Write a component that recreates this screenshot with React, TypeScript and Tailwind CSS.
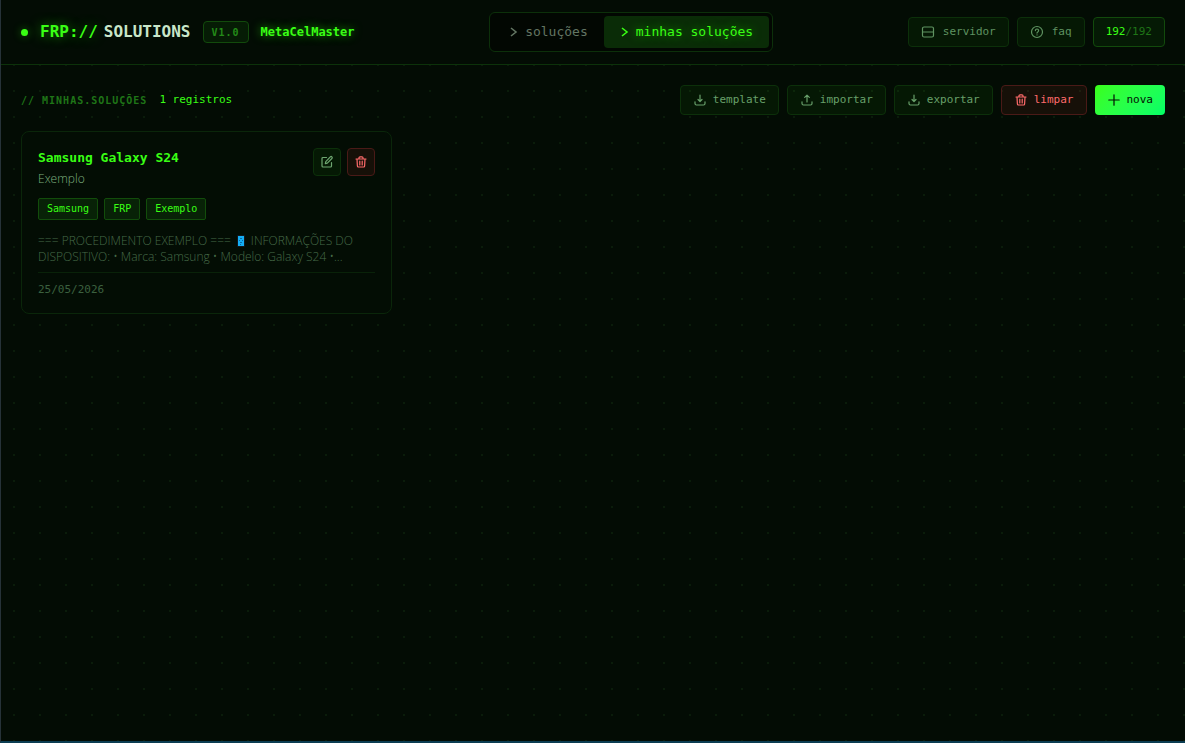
import type { ReactNode } from 'react';

const mono = "font-['DejaVu_Sans_Mono',monospace]";

interface IconProps {
  size?: number;
  children: ReactNode;
}

function Icon({ size = 14, children }: IconProps) {
  return (
    <svg
      width={size}
      height={size}
      viewBox="0 0 14 14"
      fill="none"
      stroke="currentColor"
      strokeWidth="1.2"
      strokeLinecap="round"
      strokeLinejoin="round"
      className="shrink-0"
      aria-hidden="true"
    >
      {children}
    </svg>
  );
}

const ServerIcon = () => (
  <Icon>
    <rect x="1.5" y="2" width="11" height="10" rx="1.5" />
    <path d="M1.5 7h11" />
  </Icon>
);

const HelpIcon = () => (
  <Icon>
    <circle cx="7" cy="7" r="5.5" />
    <path d="M5.4 5.6a1.6 1.6 0 1 1 2.4 1.4c-.5.3-.8.6-.8 1.1M7 9.8v.1" />
  </Icon>
);

const DownloadIcon = () => (
  <Icon>
    <path d="M7 2v6.3M5 6.5l2 2 2-2M2 8.8v1.7A1.5 1.5 0 0 0 3.5 12h7a1.5 1.5 0 0 0 1.5-1.5V8.8" />
  </Icon>
);

const UploadIcon = () => (
  <Icon>
    <path d="M7 9V2.2M4.7 4.4 7 2.1l2.3 2.3M2 8.8v1.7A1.5 1.5 0 0 0 3.5 12h7a1.5 1.5 0 0 0 1.5-1.5V8.8" />
  </Icon>
);

const TrashIcon = () => (
  <Icon>
    <path d="M2 4h10M5 4V2.8a1 1 0 0 1 1-1h2a1 1 0 0 1 1 1V4M3 4l.4 7a1 1 0 0 0 1 1h5.2a1 1 0 0 0 1-1L11 4M5.8 6.2v3.8M8.2 6.2v3.8" />
  </Icon>
);

const EditIcon = () => (
  <Icon>
    <path d="M6.5 2.5H3a1 1 0 0 0-1 1V11a1 1 0 0 0 1 1h7.5a1 1 0 0 0 1-1V7.5M10.3 1.9a1.1 1.1 0 0 1 1.6 1.6L7.3 8.1l-2 .5.5-2 4.5-4.7Z" />
  </Icon>
);

const PlusIcon = () => (
  <Icon>
    <path d="M7 1.8v10.4M1.8 7h10.4" />
  </Icon>
);

const ChevronIcon = () => (
  <svg
    width="10"
    height="12"
    viewBox="0 0 10 12"
    fill="none"
    stroke="currentColor"
    strokeWidth="1.6"
    className="shrink-0"
    aria-hidden="true"
  >
    <path d="M2 2l5 4-5 4" />
  </svg>
);

const PhoneIcon = () => (
  <svg width="12" height="12" viewBox="0 0 12 12" className="mx-1 inline-block align-[-2px]" aria-hidden="true">
    <rect x="2" width="8" height="12" rx="1" fill="#10191f" />
    <rect x="3" y="1" width="6" height="10" fill="#14aef5" />
    <path d="M5 3.5h2M4 5.5h1M7 5.5h1M5 7.5h2M5 9.5h1" stroke="#0b6aa5" />
  </svg>
);

interface ToolButtonProps {
  icon: ReactNode;
  label: string;
  tone?: 'default' | 'header' | 'danger' | 'primary';
}

const tones = {
  default: 'gap-[6px] border border-[#0c300a] bg-[#39ff14]/5 text-[#68a06a]',
  header: 'gap-2 border border-[#0c300a] bg-[#39ff14]/5 text-[#5f9361]',
  danger: 'gap-[6px] border border-[#4a1a17] bg-[#ff4444]/8 text-[#ff6b6b]',
  primary: 'gap-[6px] bg-linear-135 from-[#39ff14] to-[#00ff66] text-[#031003]',
};

function ToolButton({ icon, label, tone = 'default' }: ToolButtonProps) {
  return (
    <button type="button" className={`flex h-[30px] items-center rounded px-3 text-[11px] leading-4 ${tones[tone]}`}>
      {icon}
      {label}
    </button>
  );
}

const tags = ['Samsung', 'FRP', 'Exemplo'];

function SolutionCard() {
  return (
    <article className="rounded-lg border border-[#0a260a] bg-[#030d04] p-4">
      <div className="flex items-start justify-between">
        <div>
          <h2 className="text-[13px] leading-5 font-bold text-[#39ff14]">Samsung Galaxy S24</h2>
          <p className="mt-[2px] font-['Open_Sans',sans-serif] text-xs leading-[18px] font-light text-[#7db07f]">
            Exemplo
          </p>
        </div>
        <div className="flex gap-[6px]">
          <button
            type="button"
            aria-label="Editar"
            className="flex size-7 items-center justify-center rounded border border-[#0c300a] bg-[#39ff14]/5 text-[#6fa771]"
          >
            <EditIcon />
          </button>
          <button
            type="button"
            aria-label="Excluir"
            className="flex size-7 items-center justify-center rounded border border-[#4a1a17] bg-[#ff4444]/8 text-[#ff6b6b]"
          >
            <TrashIcon />
          </button>
        </div>
      </div>

      <ul className="mt-[10px] flex gap-[6px]">
        {tags.map((tag) => (
          <li
            key={tag}
            className="flex h-[22px] items-center rounded-xs border border-[#124d0b] bg-[#082207] px-2 text-[10px] leading-4 text-[#39ff14]"
          >
            {tag}
          </li>
        ))}
      </ul>

      <p className="mt-[13px] line-clamp-2 font-['Open_Sans',sans-serif] text-xs leading-4 font-light text-[#466b48]">
        === PROCEDIMENTO EXEMPLO ===
        <PhoneIcon />
        INFORMAÇÕES DO DISPOSITIVO: • Marca: Samsung • Modelo: Galaxy S24 •...
      </p>

      <div className="mt-[7px] border-t border-[#092209] pt-[10px]">
        <time dateTime="2026-05-25" className="block text-[11px] leading-[14px] text-[#3b603f]">
          25/05/2026
        </time>
      </div>
    </article>
  );
}

export default function App() {
  return (
    <div
      className={`${mono} flex min-h-screen flex-col border-b-2 border-l border-b-[#0b3d52] border-l-[#263238] bg-[#030c04] bg-[radial-gradient(circle,#0a1c0a_1px,transparent_1px)] bg-size-[26px_26px]`}
    >
      <header className="flex h-[65px] items-center justify-between border-b border-[#0c320a] bg-[#030c04] px-5">
        <div className="flex items-center">
          <span className="size-[7px] rounded-full bg-[#39ff14] shadow-[0_0_8px_#39ff1466]" />
          <h1 className="ml-3 flex gap-[6px] text-base font-bold">
            <span className="text-[#39ff14] [text-shadow:0_0_12px_#39ff1480]">FRP://</span>
            <span className="text-[#c8e6c9]">SOLUTIONS</span>
          </h1>
          <span className="ml-3 flex h-[22px] items-center rounded border border-[#124a0c] bg-[#061c05] px-2 text-[10px] font-bold tracking-widest text-[#238a18]">
            V1.0
          </span>
          <span className="ml-3 text-xs font-bold text-[#39ff14] [text-shadow:0_0_10px_#39ff1499]">MetaCelMaster</span>
        </div>

        <nav className="flex rounded-md border border-[#0c300a] bg-[#020702] p-[3px] text-[13px]">
          <button type="button" className="flex h-8 items-center gap-[6px] rounded px-4 text-[#627562]">
            <ChevronIcon />
            soluções
          </button>
          <button
            type="button"
            className="flex h-8 items-center gap-[6px] rounded bg-[#0a2c07] px-4 text-[#39ff14] [text-shadow:0_0_10px_#39ff1480]"
          >
            <ChevronIcon />
            minhas soluções
          </button>
        </nav>

        <div className="flex gap-2">
          <ToolButton icon={<ServerIcon />} label="servidor" tone="header" />
          <ToolButton icon={<HelpIcon />} label="faq" tone="header" />
          <span className="flex h-[30px] items-center rounded border border-[#124a0c] bg-[#051a05] px-3 text-[11px] leading-4 text-[#39ff14]">
            192<span className="text-[#1f7517]">/192</span>
          </span>
        </div>
      </header>

      <main className="p-5">
        <div className="flex items-center justify-between">
          <div className="flex items-center gap-3">
            <span className="text-[10px] font-bold tracking-widest text-[#1f7517]">// MINHAS.SOLUÇÕES</span>
            <span className="text-[11px] text-[#39ff14]">1 registros</span>
          </div>
          <div className="flex gap-2">
            <ToolButton icon={<DownloadIcon />} label="template" />
            <ToolButton icon={<UploadIcon />} label="importar" />
            <ToolButton icon={<DownloadIcon />} label="exportar" />
            <ToolButton icon={<TrashIcon />} label="limpar" tone="danger" />
            <ToolButton icon={<PlusIcon />} label="nova" tone="primary" />
          </div>
        </div>

        <section className="mt-4 grid grid-cols-3 gap-4">
          <SolutionCard />
        </section>
      </main>
    </div>
  );
}
